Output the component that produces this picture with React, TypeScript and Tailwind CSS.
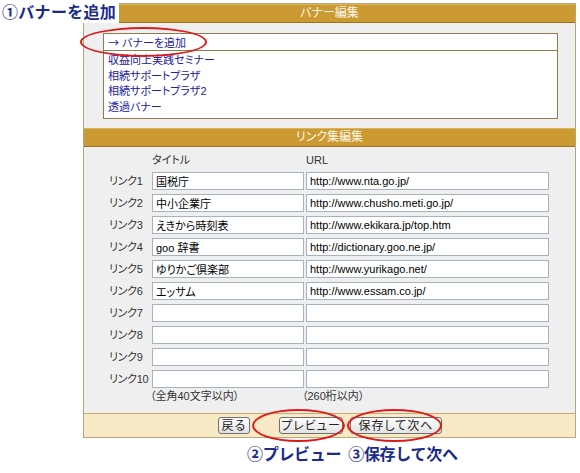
import React from "react";

const links: [string, string][] = [
  ["国税庁", "http://www.nta.go.jp/"],
  ["中小企業庁", "http://www.chusho.meti.go.jp/"],
  ["えきから時刻表", "http://www.ekikara.jp/top.htm"],
  ["goo 辞書", "http://dictionary.goo.ne.jp/"],
  ["ゆりかご倶楽部", "http://www.yurikago.net/"],
  ["エッサム", "http://www.essam.co.jp/"],
  ["", ""],
  ["", ""],
  ["", ""],
  ["", ""],
];

const banners = ["収益向上実践セミナー", "相続サポートプラザ", "相続サポートプラザ2", "透過バナー"];

function Header({ title }: { title: string }) {
  return (
    <div className="h-[19px] bg-[#cc9a33] border-t border-t-[#dcb45c] border-b border-b-[#9c7224] text-center text-[#fdf6e6] text-[12px] leading-[17px]">
      {title}
    </div>
  );
}

function Btn({ label, w, cls }: { label: string; w: string; cls?: string }) {
  return (
    <button
      className={`${w} ${cls ?? ""} h-[17px] border border-[#707070] rounded-[3px] bg-gradient-to-b from-white to-[#e2e2e2] text-[12px] leading-[14px] text-[#222] tracking-[1px]`}
    >
      {label}
    </button>
  );
}

export default function App() {
  return (
    <div className="relative w-[580px] h-[473px] bg-white overflow-hidden [font-family:'Liberation_Sans','Noto_Sans_CJK_JP',sans-serif] [font-feature-settings:'palt']">
      <div className="pt-[3px] pl-[83px]">
        <div className="w-[493px] border border-[#b6a679] bg-[#efefef]">
          <Header title="バナー編集" />
          <div className="pt-[10px] pb-[9px] pl-[19px]">
            <div className="w-[455px] h-[86px] border border-[#8c7c50] bg-white overflow-hidden">
              <div className="h-[17px] border-b border-[#8c7c50] pl-[4px] text-[11px] leading-[16px] text-[#2020a0]">
                <span className="[font-family:'Noto_Sans_CJK_JP',sans-serif]">→</span> バナーを追加
              </div>
              <div className="pl-[4px] pt-[2px] text-[11px] leading-[15.5px] text-[#2020a0]">
                {banners.map((b) => (
                  <div key={b}>{b}</div>
                ))}
              </div>
            </div>
          </div>
          <Header title="リンク集編集" />
          <div className="pl-[25px] pt-[5px] pb-[10px] text-[11px] text-[#333]">
            <div className="flex h-[16px] leading-[16px]">
              <div className="w-[43px]" />
              <div className="w-[154px]">タイトル</div>
              <div>URL</div>
            </div>
            <div className="mt-[4px] flex flex-col gap-[4px]">
              {links.map(([t, u], i) => (
                <div key={i} className="flex items-center h-[18px]">
                  <div className="w-[43px] leading-[18px] tracking-[-0.3px]">リンク{i + 1}</div>
                  <input
                    readOnly
                    value={t}
                    className="w-[152px] h-[18px] border border-[#a3b3c4] bg-white px-[3px] text-[11px] text-black outline-none"
                  />
                  <input
                    readOnly
                    value={u}
                    className="ml-[2px] w-[243px] h-[18px] border border-[#a3b3c4] bg-white px-[3px] text-[11px] text-black outline-none"
                  />
                </div>
              ))}
            </div>
            <div className="flex h-[14px] mt-[1px] leading-[14px]">
              <div className="w-[41px]" />
              <div className="w-[152px]">（全角40文字以内）</div>
              <div>（260桁以内）</div>
            </div>
          </div>
          <div className="h-[24px] border-t border-[#cbae66] bg-[#f7e9c6] flex items-center pl-[134px]">
            <Btn label="戻る" w="w-[32px]" />
            <Btn label="プレビュー" w="w-[64px]" cls="ml-[29px]" />
            <Btn label="保存して次へ" w="w-[92px]" cls="ml-[7px]" />
          </div>
        </div>
      </div>

      <div className="flex pl-[247px] pt-[5px] text-[16px] font-bold leading-[20px] text-[#1c2a8c] [font-family:'Noto_Sans_CJK_JP',sans-serif] [font-feature-settings:normal] tracking-[-0.3px]">
        <span>②プレビュー</span>
        <span className="ml-[7px]">③保存して次へ</span>
      </div>

      <div className="absolute left-0 top-0 w-[119px] h-[23px] bg-white pl-[2px] text-[16px] font-bold leading-[22px] text-[#1c2a8c] [font-family:'Noto_Sans_CJK_JP',sans-serif] [font-feature-settings:normal] tracking-[0.3px]">
        ①バナーを追加
      </div>

      <div className="absolute left-[80px] top-[27px] w-[127px] h-[30px] rounded-[50%] border-2 border-[#e01818]" />
      <div className="absolute left-[252px] top-[409px] w-[93px] h-[33px] rounded-[50%] border-2 border-[#e01818]" />
      <div className="absolute left-[347px] top-[409px] w-[95px] h-[33px] rounded-[50%] border-2 border-[#e01818]" />
    </div>
  );
}
